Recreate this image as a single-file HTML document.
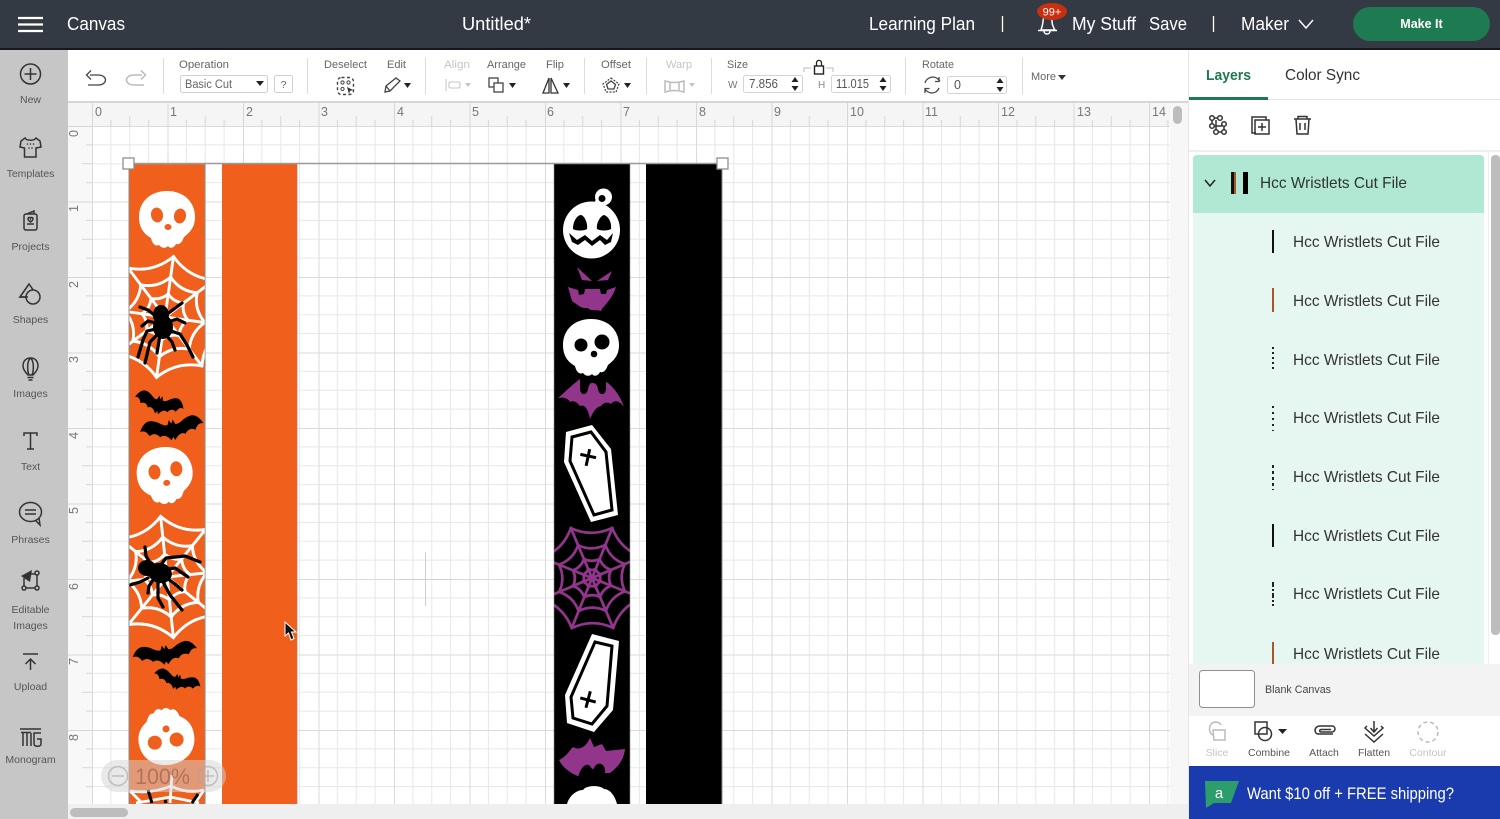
<!DOCTYPE html>
<html lang="en">
<head>
<meta charset="utf-8">
<title>Canvas</title>
<style>
html,body{margin:0;padding:0;width:1500px;height:819px;overflow:hidden;background:#fff}
#page{position:absolute;left:0;top:0;width:1500px;height:819px;overflow:hidden}
svg{display:block;filter:blur(.35px)}
text{font-family:"Liberation Sans",sans-serif}
.top{fill:#fff;font-size:18px}
.lab{fill:#666;font-size:11px}
.dis{fill:#c4c4c4;font-size:11px}
.side{fill:#555;font-size:10.5px;text-anchor:middle}
.rul{fill:#777;font-size:12.5px}
.layer{fill:#333;font-size:16px}
.ic{fill:none;stroke:#333;stroke-width:1.5}
.icl{fill:none;stroke:#bbb;stroke-width:1.5}
.tb{fill:none;stroke:#444;stroke-width:1.3}
</style>
</head>
<body>
<div id="page">
<svg width="1500" height="819" viewBox="0 0 1500 819" xmlns="http://www.w3.org/2000/svg">
<defs>
<pattern id="grid" x="92" y="126" width="75.5" height="75.5" patternUnits="userSpaceOnUse">
<path d="M18.875 0V75.5M37.75 0V75.5M56.625 0V75.5M0 18.875H75.5M0 37.75H75.5M0 56.625H75.5" stroke="#e8e8e8" stroke-width="1" fill="none"/>
<path d="M.5 0V75.5M0 .5H75.5" stroke="#dadada" stroke-width="1" fill="none"/>
</pattern>
<pattern id="rticks" x="92" y="102" width="75.5" height="24" patternUnits="userSpaceOnUse">
<path d="M.5 0V24M18.9 18V24M37.75 14V24M56.6 18V24" stroke="#d6d6d6" fill="none"/>
</pattern>
<pattern id="vticks" x="68" y="126" width="24" height="75.5" patternUnits="userSpaceOnUse">
<path d="M0 .5H24M18 18.9H24M14 37.75H24M18 56.6H24" stroke="#d6d6d6" fill="none"/>
</pattern>
<path id="skull" d="M0-29C18-29 28-17 28-3 28 8 22 13 17 17 15 22 13 25 9 24 7 28 3 29 1 26-2 29-6 28-8 25-12 27-15 23-16 18-23 14-28 8-28-3-28-18-17-29 0-29Z"/>
<path id="bat" d="M0-8 3-14 6-7C14-5 18-14 30-16 38-18 45-12 50-2 42-4 40 0 36 6 30 2 24 4 20 10 14 6 8 10 3 17L0 12-3 17C-8 10-14 6-20 10-24 4-30 2-36 6-40 0-42-4-50-2-45-12-38-18-30-16-18-14-14-5-6-7L-3-14Z"/>
<g id="web" fill="none" stroke-linecap="round">
<path d="M100 0Q69 29 71 71 29 69 0 100-29 69-71 71-69 29-100 0-69-29-71-71-29-69 0-100 29-69 71-71 69-29 100 0Z"/>
<path d="M66 0Q45 19 46.700 46.700 19 45 0 66-19 45-46.700 46.700-45 19-66 0-45-19-46.700-46.700-19-45 0-66 19-45 46.700-46.700 45-19 66 0Z"/>
<path d="M38 0Q26 11 27 27 11 26 0 38-11 26-27 27-26 11-38 0-26-11-27-27-11-26 0-38 11-26 27-27 26-11 38 0Z"/>
<path d="M-100 0H100M0-100V100M-71-71 71 71M-71 71 71-71"/>
</g>
<path id="ring4" fill="none" d="M18 0Q12 5 13 13 5 12 0 18-5 12-13 13-12 5-18 0-12-5-13-13-5-12 0-18 5-12 13-13 12-5 18 0Z"/>
<clipPath id="c1"><rect x="129" y="164" width="76" height="640"/></clipPath>
<clipPath id="c2"><rect x="554" y="164" width="76" height="640"/></clipPath>
<clipPath id="list"><rect x="1189" y="152" width="300" height="512"/></clipPath>
</defs>

<!-- page -->
<rect width="1500" height="819" fill="#fff"/>

<!-- canvas grid -->
<rect x="68" y="102" width="1120" height="702" fill="#fafafa"/>
<rect x="92" y="126" width="1078" height="678" fill="#fff"/>
<rect x="92" y="126" width="1078" height="678" fill="url(#grid)"/>
<rect x="68" y="102" width="1102" height="24" fill="#f5f5f5"/>
<rect x="92" y="102" width="1078" height="24" fill="url(#rticks)"/>
<rect x="68" y="126" width="24" height="678" fill="#f8f8f8"/>
<rect x="68" y="126" width="24" height="678" fill="url(#vticks)"/>
<g class="rul">
<text x="95" y="116">0</text><text x="170" y="116">1</text><text x="246" y="116">2</text><text x="321" y="116">3</text><text x="397" y="116">4</text><text x="472" y="116">5</text><text x="547" y="116">6</text><text x="623" y="116">7</text><text x="699" y="116">8</text><text x="774" y="116">9</text><text x="850" y="116">10</text><text x="925" y="116">11</text><text x="1001" y="116">12</text><text x="1077" y="116">13</text><text x="1152" y="116">14</text>
</g>
<g class="rul">
<text transform="translate(78,137) rotate(-90)">0</text><text transform="translate(78,212) rotate(-90)">1</text><text transform="translate(78,288) rotate(-90)">2</text><text transform="translate(78,363) rotate(-90)">3</text><text transform="translate(78,439) rotate(-90)">4</text><text transform="translate(78,514) rotate(-90)">5</text><text transform="translate(78,590) rotate(-90)">6</text><text transform="translate(78,665) rotate(-90)">7</text><text transform="translate(78,741) rotate(-90)">8</text>
</g>
<path d="M425.500 552V606M399 579.500H452" stroke="#cfcfcf" fill="none"/>

<!-- orange strips -->
<rect x="129" y="164" width="76" height="640" fill="#f05f1c" stroke="#9a8a80" stroke-width="1"/>
<rect x="222" y="164" width="75" height="640" fill="#f05f1c"/>
<path d="M297.500 164V804" stroke="#d4d4d4"/>
<g clip-path="url(#c1)">
  <g transform="translate(167,220)" fill="#fff">
    <use href="#skull"/>
    <ellipse cx="-10" cy="-5" rx="6" ry="7.500" fill="#f05f1c" transform="rotate(-10 -10 -5)"/>
    <ellipse cx="13" cy="-4" rx="6" ry="7.500" fill="#f05f1c" transform="rotate(10 13 -4)"/>
    <ellipse cx="1" cy="7" rx="3.500" ry="3" fill="#f05f1c"/>
  </g>
  <use href="#web" transform="translate(165,317) rotate(8) scale(.61)" stroke="#fff" stroke-width="4.800"/>
  <g stroke="#000" stroke-width="3.200" fill="none" stroke-linecap="round" stroke-linejoin="round">
    <path d="M158 318 148 310 140 307M156 323 148 321 142 326M156 329 147 331 143 340 138 357M159 333 150 342 145 363M166 315 174 309 182 303M168 322 177 319 185 323M168 330 180 334 187 345 193 357M166 335 172 342 175 350M160 335 157 353"/>
  </g>
  <ellipse cx="161" cy="315" rx="8" ry="10"/>
  <ellipse cx="163" cy="327" rx="10" ry="12"/>
  <use href="#bat" transform="translate(159,404) rotate(14) scale(.5,.6)"/>
  <use href="#bat" transform="translate(172,429) rotate(-8) scale(.64,.66)"/>
  <g transform="translate(165,476) rotate(-6)" fill="#fff">
    <use href="#skull"/>
    <ellipse cx="-10" cy="-5" rx="6" ry="7.500" fill="#f05f1c"/>
    <ellipse cx="12" cy="-6" rx="6" ry="7.500" fill="#f05f1c"/>
    <ellipse cx="1" cy="7" rx="3.500" ry="3" fill="#f05f1c"/>
  </g>
  <use href="#web" transform="translate(167,577) rotate(-6) scale(.61)" stroke="#fff" stroke-width="4.800"/>
  <g stroke="#000" stroke-width="3.200" fill="none" stroke-linecap="round" stroke-linejoin="round">
    <path d="M152 566 146 556 145 547M160 566 166 558 185 556 200 562M162 570 175 568 188 577M164 576 175 584 182 590M162 580 170 595 182 610M158 582 158 598 163 607M153 580 149 586 148 593M148 578 140 582 130 585"/>
  </g>
  <ellipse cx="147" cy="568" rx="9" ry="8"/>
  <ellipse cx="160" cy="573" rx="12" ry="10" transform="rotate(15 160 573)"/>
  <use href="#bat" transform="translate(165,654) rotate(-8) scale(.65,.62)"/>
  <use href="#bat" transform="translate(177,681) rotate(16) scale(.48,.5)"/>
  <g transform="translate(166,736) rotate(172)" fill="#fff">
    <use href="#skull"/>
    <ellipse cx="-10" cy="-5" rx="7" ry="7" fill="#f05f1c"/>
    <ellipse cx="12" cy="-5" rx="7" ry="7" fill="#f05f1c"/>
    <ellipse cx="-1" cy="7" rx="3.500" ry="3.500" fill="#f05f1c"/>
  </g>
  <path d="M172 775 170 803M130 791Q152 794 171 786 186 794 204 790M136 803Q154 800 170 797 186 800 199 803M130 791 142 803M204 790 195 803" fill="none" stroke="#fff" stroke-width="2.800"/>
  <path d="M148 790 152 803M192 803 198 794M165 800 166 803" stroke="#000" stroke-width="3" fill="none"/>
</g>

<!-- black strips -->
<rect x="554" y="164" width="76" height="640" fill="#000"/>
<rect x="646" y="164" width="76" height="640" fill="#000"/>
<g clip-path="url(#c2)">
  <circle cx="603.500" cy="197" r="8.500" fill="#fff"/>
  <circle cx="602" cy="198.500" r="3.500" fill="#000"/>
  <path d="M594 205 597 195 600 204Z" fill="#fff"/>
  <circle cx="591.500" cy="230" r="28.500" fill="#fff"/>
  <path d="M573 229C573 220 578 215 581 215 585 216 588 224 587 229 585 231 575 231 573 229ZM597 229C596 224 600 216 604 215 608 216 612 222 611 229 608 231 600 231 597 229Z"/>
  <path d="M569 233 577 240 585 235 592 241 600 235 607 240 613 233 611 242 605 245 600 240 592 246 585 240 578 245 572 242Z"/>
  <g fill="#92368c">
    <path d="M577 267 592 281 582 280ZM612 271 597 281 608 280Z"/>
    <path d="M568 287 578 290 579 295 584 294 585 289 600 289 601 294 606 294 607 290 616 287C612 300 603 306 601 311 595 309 592 312 588 308 581 309 578 305 572 301Z"/>
    <path d="M580 379C572 385 565 392 558 398 563 397 568 398 570 402 573 400 577 402 580 406 584 404 588 408 590 419 593 412 596 407 601 406 604 402 608 402 611 404 614 400 619 400 624 407 621 398 616 390 608 383L595 376Z"/>
  </g>
  <path d="M580 372H606V388C606 396 599 396 598 389 597 384 595 383 592 383 590 383 589 385 588 389 587 396 580 396 580 388Z"/>
  <g transform="translate(591,348)" fill="#fff">
    <use href="#skull"/>
    <circle cx="-10" cy="-3" r="6.500" fill="#000"/>
    <circle cx="11" cy="-6" r="7.500" fill="#000"/>
    <circle cx="3" cy="6" r="3.300" fill="#000"/>
  </g>
  <path d="M566 432 592 425 611 449 618 515 591 522 564 462Z" fill="#fff"/>
  <path d="M572 437 591 432 606 452 612 510 594 515 570 461Z" fill="none" stroke="#000" stroke-width="3"/>
  <path d="M588 449V466M580 456H596" transform="rotate(12 588 457)" stroke="#000" stroke-width="3" fill="none"/>
  <use href="#web" transform="translate(592,578) rotate(22) scale(.54)" stroke="#92368c" stroke-width="5"/>
  <use href="#ring4" transform="translate(592,578) rotate(22) scale(.54)" stroke="#92368c" stroke-width="5"/>
  <path d="M592 634 619 641 613 710 594 732 567 723 565 695Z" fill="#fff"/>
  <path d="M595 642 612 646 607 706 592 724 573 718 571 697Z" fill="none" stroke="#000" stroke-width="3"/>
  <path d="M588 691V708M580 700H596" transform="rotate(15 588 700)" stroke="#000" stroke-width="3" fill="none"/>
  <path d="M590 738 594 747 602 744 606 751 625 749C624 762 614 770 610 773 604 773 596 772 583 778 574 775 564 770 559 760 566 757 570 750 573 747 578 750 585 749 590 738Z" fill="#92368c"/>
  <path d="M578 778C580 768 586 762 590 766 592 769 593 771 595 766 600 760 608 766 604 777Z"/>
  <path d="M567 804C570 794 578 790 583 790 586 785 600 785 604 789 610 789 615 796 617 804Z" fill="#fff"/>
</g>

<!-- selection -->
<path d="M128 163.500H722" stroke="#9b9b9b" stroke-width="1.500"/>
<path d="M129 164V804" stroke="#8e8e8e"/>
<path d="M722 164V804" stroke="#8e8e8e"/>
<path d="M554 164V804M205 164V804M630 164V804" stroke="#8e8e8e" opacity=".6"/>
<rect x="123" y="158" width="11" height="11" fill="#fff" stroke="#8f8f8f" stroke-width="1.300"/>
<rect x="717" y="158" width="11" height="11" fill="#fff" stroke="#8f8f8f" stroke-width="1.300"/>

<!-- cursor -->
<path d="M285 622V636L288.500 633 291 640 294 638.500 291.500 632H296Z" fill="#111" stroke="#fff" stroke-width="1"/>

<!-- zoom pill -->
<rect x="101" y="760" width="125" height="32" rx="16" fill="#d4d4d4" opacity=".5"/>
<g opacity=".62">
<circle cx="118" cy="776" r="9.500" fill="none" stroke="#a5a5a5" stroke-width="1.500"/>
<path d="M112 776H124" stroke="#a5a5a5" stroke-width="1.500"/>
<text x="135" y="784" font-size="22" fill="#8f5f4a" textLength="55" lengthAdjust="spacingAndGlyphs">100%</text>
<circle cx="208" cy="776" r="9.500" fill="none" stroke="#a5a5a5" stroke-width="1.500"/>
<path d="M202 776H214M208 770V782" stroke="#a5a5a5" stroke-width="1.500"/>
</g>

<!-- scrollbars -->
<rect x="68" y="804" width="1120" height="15" fill="#efefef"/>
<rect x="70" y="808" width="58" height="9" rx="4.500" fill="#bdbdbd"/>
<rect x="1170" y="102" width="18" height="702" fill="#f7f7f7"/>
<rect x="1173" y="106" width="9" height="18" rx="4.500" fill="#bdbdbd"/>

<!-- top bar -->
<rect width="1500" height="49" fill="#343a43"/>
<rect y="48" width="1500" height="2" fill="#15181c"/>
<path d="M18 18H43M18 24.500H43M18 31H43" stroke="#fff" stroke-width="2.200"/>
<text class="top" x="67" y="30" textLength="58" lengthAdjust="spacingAndGlyphs">Canvas</text>
<text class="top" x="462" y="30" textLength="69" lengthAdjust="spacingAndGlyphs">Untitled*</text>
<text class="top" x="869" y="30" textLength="106" lengthAdjust="spacingAndGlyphs">Learning Plan</text>
<path d="M1002.500 16V32M1213.500 16V32" stroke="#fff" stroke-width="1.300"/>
<path d="M1041 30C1042 27 1043 24 1043 21 1043 18 1045 16 1047 16 1050 16 1052 18 1052 21 1052 24 1053 27 1055 30ZM1038 30.500H1057M1044 31C1044 35 1050 35 1050 31" fill="none" stroke="#fff" stroke-width="1.500"/>
<ellipse cx="1052" cy="11.500" rx="15" ry="8.500" fill="#c9300f"/>
<text x="1052" y="15.500" fill="#fff" font-size="11" text-anchor="middle">99+</text>
<text class="top" x="1072" y="30" textLength="64" lengthAdjust="spacingAndGlyphs">My Stuff</text>
<text class="top" x="1149" y="30" textLength="38" lengthAdjust="spacingAndGlyphs">Save</text>
<text class="top" x="1241" y="30" textLength="48" lengthAdjust="spacingAndGlyphs">Maker</text>
<path d="M1299 20 1306 28 1313 20" fill="none" stroke="#fff" stroke-width="1.400"/>
<rect x="1353" y="7" width="137" height="34" rx="17" fill="#1e7a50"/>
<text x="1421.500" y="28" fill="#fff" font-size="12.500" font-weight="700" text-anchor="middle">Make It</text>

<!-- toolbar -->
<rect x="68" y="50" width="1120" height="51" fill="#fff"/>
<rect x="68" y="101" width="1120" height="2" fill="#d6d6d6"/>
<path d="M163.500 58V94M307.500 58V94M425.500 58V94M584.500 58V94M646.500 58V94M711.500 58V94M905.500 58V94M1022.500 58V94" stroke="#dcdcdc" stroke-width="1"/>
<path d="M90 75H98C108 75 108 85 98 85H88M91 70.500 86.500 75 91 79.500" class="tb" stroke-width="1.500"/>
<path d="M142 75H134C124 75 124 85 134 85H144M141 70.500 145.500 75 141 79.500" class="icl"/>
<text class="lab" x="179" y="68" textLength="50" lengthAdjust="spacingAndGlyphs">Operation</text>
<rect x="180.500" y="75.500" width="87" height="17" rx="2" fill="#fff" stroke="#cfcfcf"/>
<text x="185" y="88" font-size="11.500" fill="#666" textLength="47" lengthAdjust="spacingAndGlyphs">Basic Cut</text>
<path d="M256 81H264L260 86Z" fill="#222"/>
<rect x="274.500" y="75.500" width="18" height="17" rx="2" fill="#fff" stroke="#cfcfcf"/>
<text x="283.500" y="88" font-size="10.500" fill="#666" text-anchor="middle">?</text>
<text class="lab" x="324" y="68" textLength="43" lengthAdjust="spacingAndGlyphs">Deselect</text>
<rect x="337.500" y="77.500" width="16" height="17" rx="4" fill="none" stroke="#444" stroke-width="1.400" stroke-dasharray="3 2.500"/>
<circle cx="342.500" cy="82.500" r="1.600" fill="none" stroke="#444"/><circle cx="348.500" cy="82.500" r="1.600" fill="none" stroke="#444"/><circle cx="342.500" cy="89" r="1.600" fill="none" stroke="#444"/>
<path d="M347 87 353 90 350 91 349 94Z" fill="#333"/>
<text class="lab" x="387" y="68" textLength="19" lengthAdjust="spacingAndGlyphs">Edit</text>
<path d="M385 92 386 86 396 78 400 81 390 91ZM386 86 390 91" class="tb"/>
<path d="M404 83H411L407.500 88Z" fill="#222"/>
<text class="dis" x="444" y="68" textLength="26" lengthAdjust="spacingAndGlyphs">Align</text>
<path d="M446 79V91" stroke="#c4c4c4"/><rect x="449" y="82" width="11" height="6" rx="1.500" fill="none" stroke="#c4c4c4"/>
<path d="M465 83H471L468 87Z" fill="#c4c4c4"/>
<text class="lab" x="487" y="68" textLength="39" lengthAdjust="spacingAndGlyphs">Arrange</text>
<rect x="489" y="78" width="9" height="9" class="tb"/><rect x="494" y="83" width="9" height="9" fill="#fff" stroke="#444" stroke-width="1.300"/>
<path d="M509 83H516L512.500 88Z" fill="#222"/>
<text class="lab" x="546" y="68" textLength="18" lengthAdjust="spacingAndGlyphs">Flip</text>
<path d="M549 78V93H543ZM551 78V93H558Z" fill="none" stroke="#333" stroke-width="1.300"/>
<path d="M563 83H570L566.500 88Z" fill="#222"/>
<text class="lab" x="601" y="68" textLength="30" lengthAdjust="spacingAndGlyphs">Offset</text>
<path d="M611 78 619 84 616 92H606L603 84Z" fill="none" stroke="#444" stroke-width="1.200" stroke-dasharray="2 1.300"/>
<path d="M611 81 615.500 84.500 614 89H608L606.500 84.500Z" class="tb"/>
<path d="M624 83H631L627.500 88Z" fill="#222"/>
<text class="dis" x="666" y="68" textLength="26" lengthAdjust="spacingAndGlyphs">Warp</text>
<path d="M665 81Q674 84 684 81V92Q674 89 665 92ZM670 82V90M679 82V90" class="icl" stroke-width="1.200"/>
<path d="M689 83H695L692 87Z" fill="#c4c4c4"/>
<text class="lab" x="727" y="68" textLength="21" lengthAdjust="spacingAndGlyphs">Size</text>
<text x="728" y="88" font-size="10" fill="#777">W</text>
<rect x="743.500" y="75.500" width="59" height="17" rx="2" fill="#fff" stroke="#d4d4d4"/>
<text x="749" y="88" font-size="12.500" fill="#555" textLength="29" lengthAdjust="spacingAndGlyphs">7.856</text>
<path d="M791.500 82 795 77 798.500 82ZM791.500 86 795 91 798.500 86Z" fill="#222"/>
<text x="818" y="88" font-size="10" fill="#888">H</text>
<rect x="831.500" y="75.500" width="59" height="17" rx="2" fill="#fff" stroke="#d4d4d4"/>
<text x="836" y="88" font-size="12.500" fill="#555" textLength="33" lengthAdjust="spacingAndGlyphs">11.015</text>
<path d="M879.500 82 883 77 886.500 82ZM879.500 86 883 91 886.500 86Z" fill="#222"/>
<path d="M804 72V68H811M826 68H833V72" fill="none" stroke="#bbb"/>
<rect x="814.500" y="66" width="9" height="8" fill="none" stroke="#222" stroke-width="1.400"/>
<path d="M816.500 66V63C816.500 59.500 821.500 59.500 821.500 63V66" fill="none" stroke="#222" stroke-width="1.300"/>
<text class="lab" x="922" y="68" textLength="32" lengthAdjust="spacingAndGlyphs">Rotate</text>
<path d="M925 83C926 79 930 77 933 77 936 77 938 79 940 81M939 77V81.500H935M939 88C938 91 935 93 932 93 929 93 926 91 925 89M925 93V88.500H929.500" fill="none" stroke="#444" stroke-width="1.300"/>
<rect x="947.500" y="76.500" width="59" height="17" rx="2" fill="#fff" stroke="#d4d4d4"/>
<text x="954" y="89" font-size="12.500" fill="#555">0</text>
<path d="M996.500 83 1000 78 1003.500 83ZM996.500 87 1000 92 1003.500 87Z" fill="#222"/>
<text class="lab" x="1031" y="80" textLength="25" lengthAdjust="spacingAndGlyphs">More</text>
<path d="M1058 75H1066L1062 80Z" fill="#333"/>

<!-- sidebar -->
<rect y="50" width="68" height="769" fill="#c6c6c6"/>
<g class="ic">
<circle cx="30.500" cy="74" r="10"/><path d="M30.500 68V80M24.500 74H36.500"/>
<path d="M25 138 21 141 20 147 24.500 148V157H36V148L41 147 40 141 36 138C34 141 27 141 25 138Z"/>
<rect x="24" y="214" width="13" height="16" rx="2"/><path d="M27 214 34 211V214M27 224H34M28 219C28 217 30 217 30.500 218.500 31 217 33 217 33 219 33 220.500 31.500 221 30.500 222 29.500 221 28 220.500 28 219Z"/>
<path d="M29 284 20 297H38Z"/><circle cx="33" cy="297" r="7" fill="#c6c6c6"/><path d="M29 284 20 297H28"/>
<path d="M30.500 358C25 358 23 362 23 366 23 370 26 373 28 375H33C35 373 38 370 38 366 38 362 36 358 30.500 358ZM30.500 358C27 361 27 370 29 375M30.500 358C34 361 34 370 32 375M27.500 377.500H33.500M28.500 380H32.500"/>
<path d="M24 436V433H37V436M30.500 433V449M27 449H34"/>
<ellipse cx="30.500" cy="512" rx="11" ry="9.500"/><path d="M25 510H36M25 514H36M35 520 40 525 39 518"/>
<path d="M26 588H35M37 575V586"/><circle cx="37" cy="573" r="2"/><circle cx="24" cy="588" r="2"/><circle cx="37" cy="588" r="2"/><path d="M24 586V578M30 574H35"/>
<path d="M23 654H38M30.500 670V659M25.500 664 30.500 659 35.500 664"/>
<path d="M20 729H41M21 732.500H31M23 733V746M27 733V746M31 733V746M41 733H34V744C34 747 41 747 41 744V739H37"/>
</g>
<g fill="#333"><path d="M21 576 32 570 30 582Z"/><circle cx="27.500" cy="144" r=".8"/><circle cx="30.500" cy="144" r=".8"/><circle cx="33.500" cy="144" r=".8"/><circle cx="29" cy="148" r=".8"/><circle cx="32" cy="148" r=".8"/></g>
<g class="side">
<text x="30.500" y="103">New</text><text x="30.500" y="177">Templates</text><text x="30.500" y="250">Projects</text><text x="30.500" y="323">Shapes</text><text x="30.500" y="397">Images</text><text x="30.500" y="470">Text</text><text x="30.500" y="543">Phrases</text><text x="30.500" y="613">Editable</text><text x="30.500" y="629">Images</text><text x="30.500" y="690">Upload</text><text x="30.500" y="763">Monogram</text>
</g>

<!-- right panel -->
<rect x="1188" y="50" width="312" height="769" fill="#fff"/>
<path d="M1188.500 50V819" stroke="#e6e6e6"/>
<text x="1206" y="80" font-size="15" font-weight="700" fill="#1d7a50" textLength="45" lengthAdjust="spacingAndGlyphs">Layers</text>
<text x="1285" y="80" font-size="16" fill="#333" textLength="75" lengthAdjust="spacingAndGlyphs">Color Sync</text>
<rect x="1189" y="99" width="311" height="1" fill="#e5e5e5"/>
<rect x="1189" y="97" width="79" height="3" fill="#1d7a50"/>
<g class="ic" stroke-width="1.400">
<circle cx="1212" cy="118" r="2.300"/><circle cx="1220" cy="118" r="2.300"/><circle cx="1212" cy="126" r="2.300"/><circle cx="1224" cy="124" r="2.300"/><circle cx="1216" cy="132" r="2.300"/><circle cx="1224" cy="132" r="2.300"/><path d="M1214 118H1218M1212 120V124M1215 126H1222M1216 120V130M1224 126V130M1218 132H1222"/>
<path d="M1256 133H1252V117H1266V120"/><rect x="1255" y="120" width="14" height="14"/><path d="M1262 123V131M1258 127H1266"/>
<path d="M1294 119H1311M1298 119V116.500H1307V119M1296 119 1297 134H1308L1309 119M1300 123V130M1305 123V130"/>
</g>
<rect x="1189" y="150" width="311" height="2" fill="#eee"/>

<g clip-path="url(#list)">
<rect x="1193" y="213" width="291" height="451" fill="#e6f6f1"/>
<path d="M1193 213V159Q1193 155 1197 155H1480Q1484 155 1484 159V213Z" fill="#b0e8d4"/>
<path d="M1205 180 1210 186 1215 180" fill="none" stroke="#222" stroke-width="1.500"/>
<rect x="1231" y="172" width="5" height="22" fill="#111"/><rect x="1234" y="172" width="2" height="22" fill="#a8562a"/>
<rect x="1243" y="172" width="5" height="22" fill="#000"/>
<text class="layer" x="1260" y="188" textLength="147" lengthAdjust="spacingAndGlyphs">Hcc Wristlets Cut File</text>
<g stroke-width="2" fill="none">
<path d="M1273 230V253" stroke="#111"/>
<path d="M1273 288V312" stroke="#a8562a"/>
<path d="M1273 347V372" stroke="#222" stroke-dasharray="2 3"/>
<path d="M1273 406V431" stroke="#222" stroke-dasharray="2 4"/>
<path d="M1273 465V490" stroke="#222" stroke-dasharray="3 3"/>
<path d="M1273 524V547" stroke="#111"/>
<path d="M1273 582V606" stroke="#222" stroke-dasharray="5 2 2 2"/>
<path d="M1273 642V664" stroke="#a8562a"/>
</g>
<g class="layer">
<text x="1293" y="247" textLength="147" lengthAdjust="spacingAndGlyphs">Hcc Wristlets Cut File</text>
<text x="1293" y="306" textLength="147" lengthAdjust="spacingAndGlyphs">Hcc Wristlets Cut File</text>
<text x="1293" y="365" textLength="147" lengthAdjust="spacingAndGlyphs">Hcc Wristlets Cut File</text>
<text x="1293" y="423" textLength="147" lengthAdjust="spacingAndGlyphs">Hcc Wristlets Cut File</text>
<text x="1293" y="482" textLength="147" lengthAdjust="spacingAndGlyphs">Hcc Wristlets Cut File</text>
<text x="1293" y="541" textLength="147" lengthAdjust="spacingAndGlyphs">Hcc Wristlets Cut File</text>
<text x="1293" y="599" textLength="147" lengthAdjust="spacingAndGlyphs">Hcc Wristlets Cut File</text>
<text x="1293" y="659" textLength="147" lengthAdjust="spacingAndGlyphs">Hcc Wristlets Cut File</text>
</g>
</g>
<rect x="1491" y="155" width="9" height="480" rx="4" fill="#bdbdbd"/>
<path d="M1488.500 152V664" stroke="#efefef"/>

<!-- blank canvas -->
<rect x="1189" y="664" width="311" height="52" fill="#f3f3f3"/>
<rect x="1199.500" y="670.500" width="55" height="37" rx="3" fill="#fff" stroke="#8f8f8f"/>
<text x="1265" y="693" font-size="11" fill="#444" textLength="66" lengthAdjust="spacingAndGlyphs">Blank Canvas</text>

<!-- tools -->
<rect x="1189" y="716" width="311" height="50" fill="#fff"/>
<g class="icl"><path d="M1213 735C1208 733 1208 723 1215 722 1218 722 1220 723 1221 725"/><path d="M1213 730H1225V740H1214Z"/></g>
<g class="ic" stroke-width="1.400"><rect x="1255" y="722" width="12" height="12"/><circle cx="1265" cy="734" r="6.500"/></g>
<path d="M1278 729H1287L1282.500 734Z" fill="#222"/>
<g class="ic" stroke-width="1.500"><path d="M1333 734H1319C1316 734 1315 732 1315 730.500 1315 728 1317 726 1320 726H1332C1334 726 1335 727.500 1335 729 1335 731 1333 732 1332 732H1321C1319.500 732 1319 730 1321 729.500H1331"/></g>
<g class="ic" stroke-width="1.500"><path d="M1374 721V731M1370.500 728 1374 732 1377.500 728M1367 726 1365 728 1374 736 1383 728 1381 726M1365 734 1374 742 1383 734"/></g>
<circle cx="1428" cy="732" r="10" fill="none" stroke="#bbb" stroke-width="1.500" stroke-dasharray="4 3"/>
<text class="dis" x="1217" y="756" text-anchor="middle" font-size="10.500" style="font-size:10.5px">Slice</text>
<text x="1269" y="756" class="side">Combine</text>
<text x="1324" y="756" class="side">Attach</text>
<text x="1374" y="756" class="side">Flatten</text>
<text class="dis" x="1428" y="756" text-anchor="middle" style="font-size:10.5px">Contour</text>

<!-- banner -->
<rect x="1189" y="766" width="311" height="53" fill="#1a3bae"/>
<path d="M1205 781H1239L1231 803H1214L1206 808Z" fill="#2b9e6c"/>
<text x="1219" y="798" font-size="15" fill="#fff" text-anchor="middle">a</text>
<text x="1247" y="799" font-size="16.500" fill="#fff" textLength="207" lengthAdjust="spacingAndGlyphs">Want $10 off + FREE shipping?</text>
</svg>
</div>
</body>
</html>
